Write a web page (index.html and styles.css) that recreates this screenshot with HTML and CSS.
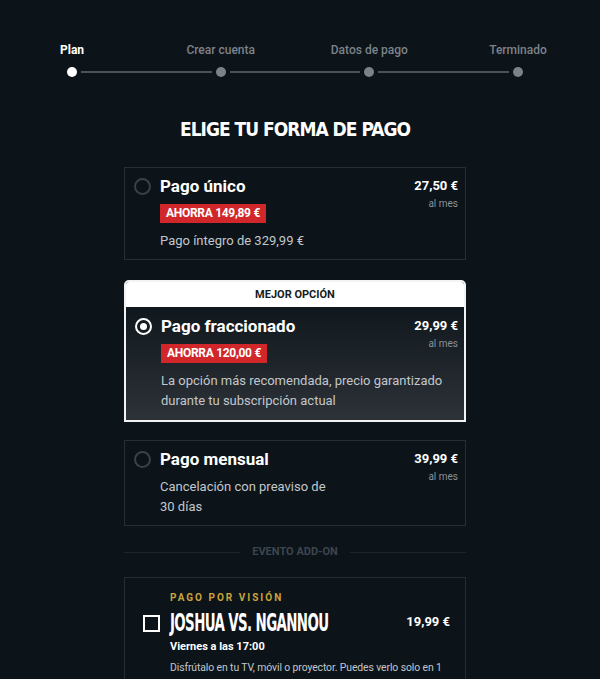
FILE: index.html
```html
<!DOCTYPE html>
<html lang="es">
<head>
    <meta charset="UTF-8">
    <meta name="viewport" content="width=device-width, initial-scale=1.0">
    <title>Elige tu forma de pago</title>
    <link rel="stylesheet" href="styles.css">
</head>
<body>
    <nav class="stepper">
        <div class="step active"><span>Plan</span><i class="dot"></i></div>
        <div class="line"></div>
        <div class="step"><span>Crear cuenta</span><i class="dot"></i></div>
        <div class="line"></div>
        <div class="step"><span>Datos de pago</span><i class="dot"></i></div>
        <div class="line"></div>
        <div class="step"><span>Terminado</span><i class="dot"></i></div>
    </nav>

    <main class="content">
        <h1>ELIGE TU FORMA DE PAGO</h1>

        <div class="plans">
            <label class="plan">
                <span class="radio"></span>
                <div class="plan-title">Pago único</div>
                <span class="badge">AHORRA 149,89 €</span>
                <p class="plan-desc">Pago íntegro de 329,99 €</p>
                <div class="price">
                    <strong>27,50 €</strong>
                    <small>al mes</small>
                </div>
            </label>

            <div class="plan-best">
                <div class="best-header">MEJOR OPCIÓN</div>
                <label class="plan selected">
                    <span class="radio"></span>
                    <div class="plan-title">Pago fraccionado</div>
                    <span class="badge">AHORRA 120,00 €</span>
                    <p class="plan-desc">La opción más recomendada, precio garantizado durante tu subscripción actual</p>
                    <div class="price">
                        <strong>29,99 €</strong>
                        <small>al mes</small>
                    </div>
                </label>
            </div>

            <label class="plan">
                <span class="radio"></span>
                <div class="plan-title">Pago mensual</div>
                <p class="plan-desc no-badge">Cancelación con preaviso de 30 días</p>
                <div class="price">
                    <strong>39,99 €</strong>
                    <small>al mes</small>
                </div>
            </label>
        </div>

        <div class="divider"><span>EVENTO ADD-ON</span></div>

        <label class="addon">
            <span class="addon-label">PAGO POR VISIÓN</span>
            <span class="checkbox"></span>
            <span class="addon-title"><span>JOSHUA VS. NGANNOU</span></span>
            <strong class="addon-price">19,99 €</strong>
            <span class="addon-time">Viernes a las 17:00</span>
            <p class="addon-desc">Disfrútalo en tu TV, móvil o proyector. Puedes verlo solo en 1 dispositivo a la vez.</p>
        </label>
    </main>
</body>
</html>
```

FILE: styles.css
```css
body {
    margin: 0;
    background-color: #0c1319;
    color: #fff;
    font-family: Roboto, "Liberation Sans", sans-serif;
}

/* pasos */
.stepper {
    display: flex;
    align-items: flex-end;
    width: 446px;
    margin-left: 72px;
    padding-top: 42px;
}

.step {
    width: 0;
    display: flex;
    flex-direction: column;
    align-items: center;
    gap: 9px;
}

.step span {
    white-space: nowrap;
    font-size: 12px;
    line-height: 16px;
    font-weight: 500;
    color: #7c8289;
}

.step.active span {
    color: #fff;
    font-weight: 700;
}

.dot {
    display: block;
    width: 10px;
    height: 10px;
    border-radius: 50%;
    background-color: #7c8289;
}

.step.active .dot {
    background-color: #fff;
}

.line {
    flex: 1;
    height: 2px;
    margin: 0 9px 4px;
    background-color: #4b5158;
}

/* contenido */
.content {
    width: 342px;
    margin-left: 124px;
}

h1 {
    margin: 40px 0 26px;
    text-align: center;
    font-family: "DejaVu Sans Condensed", sans-serif;
    font-weight: 700;
    font-size: 19px;
    line-height: 24px;
    letter-spacing: -1px;
}

.plans {
    display: flex;
    flex-direction: column;
    gap: 18px;
}

.plan {
    display: grid;
    grid-template-columns: 17px 1fr auto;
    column-gap: 9px;
    align-items: start;
    padding: 8px 7px 8px 9px;
    border: 1px solid #262e36;
}

.radio {
    grid-column: 1;
    grid-row: 1;
    box-sizing: border-box;
    width: 17px;
    height: 17px;
    margin-top: 2px;
    border: 2px solid #3a4148;
    border-radius: 50%;
}

.plan-title {
    grid-column: 2;
    grid-row: 1;
    font-size: 17px;
    line-height: 20px;
    font-weight: 700;
}

.badge {
    grid-column: 2;
    grid-row: 2;
    justify-self: start;
    margin-top: 8px;
    padding: 0 6px;
    background-color: #d1262a;
    font-size: 12px;
    line-height: 19px;
    font-weight: 700;
    letter-spacing: -0.3px;
}

.plan-desc {
    grid-column: 2 / 4;
    grid-row: 3;
    margin: 8px 0 0;
    font-size: 13px;
    line-height: 20px;
    color: #c3c7cb;
}

.plan-desc.no-badge {
    grid-row: 2;
    max-width: 180px;
}

.price {
    grid-column: 3;
    grid-row: 1 / span 2;
    display: flex;
    flex-direction: column;
    align-items: flex-end;
}

.price strong {
    font-size: 13px;
    line-height: 20px;
}

.price small {
    font-size: 10px;
    line-height: 16px;
    color: #8b9198;
}

/* mejor opcion */
.plan-best {
    margin-top: 2px;
    border: 2px solid #f2f3f4;
    border-radius: 5px 5px 0 0;
    overflow: hidden;
}

.best-header {
    background-color: #fff;
    color: #151b21;
    text-align: center;
    font-size: 11px;
    line-height: 25px;
    font-weight: 700;
}

.plan.selected {
    border: 0;
    padding: 9px 6px 9px 9px;
    background: linear-gradient(180deg, #10171d 0%, #2c3238 100%);
}

.plan.selected .radio {
    border-color: #fff;
    position: relative;
}

.plan.selected .radio::after {
    content: "";
    position: absolute;
    inset: 3px;
    border-radius: 50%;
    background-color: #fff;
}

/* separador */
.divider {
    display: flex;
    align-items: center;
    gap: 12px;
    margin: 18px 0 17px;
    font-size: 11px;
    line-height: 16px;
    font-weight: 700;
    color: #3d454d;
}

.divider::before,
.divider::after {
    content: "";
    flex: 1;
    height: 1px;
    background-color: #1d242b;
}

/* evento */
.addon {
    display: grid;
    grid-template-columns: 17px minmax(0, 1fr) auto;
    grid-template-areas:
        ". label ."
        "check title price"
        ". time time"
        ". desc desc";
    column-gap: 10px;
    align-items: center;
    padding: 13px 15px 0 18px;
    border: 1px solid #262d34;
    border-bottom: 0;
}

.addon-label {
    grid-area: label;
    font-size: 10px;
    line-height: 14px;
    font-weight: 700;
    letter-spacing: 2px;
    color: #c9a53c;
}

.checkbox {
    grid-area: check;
    box-sizing: border-box;
    width: 17px;
    height: 17px;
    margin-top: 4px;
    border: 2px solid #fff;
}

.addon-title {
    grid-area: title;
    min-width: 0;
    white-space: nowrap;
    font-family: "DejaVu Sans Condensed", sans-serif;
    font-weight: 700;
    font-size: 24px;
    line-height: 30px;
    letter-spacing: -1px;
    margin-top: 3px;
}

.addon-title span {
    display: inline-block;
    transform: scaleX(0.62);
    transform-origin: left center;
}

.addon-price {
    grid-area: price;
    white-space: nowrap;
    font-size: 13px;
}

.addon-time {
    grid-area: time;
    font-size: 11px;
    line-height: 18px;
    font-weight: 700;
}

.addon-desc {
    grid-area: desc;
    margin: 2px 0 0;
    font-size: 10.4px;
    line-height: 20px;
    letter-spacing: -0.1px;
    color: #c3c7cb;
}
```
